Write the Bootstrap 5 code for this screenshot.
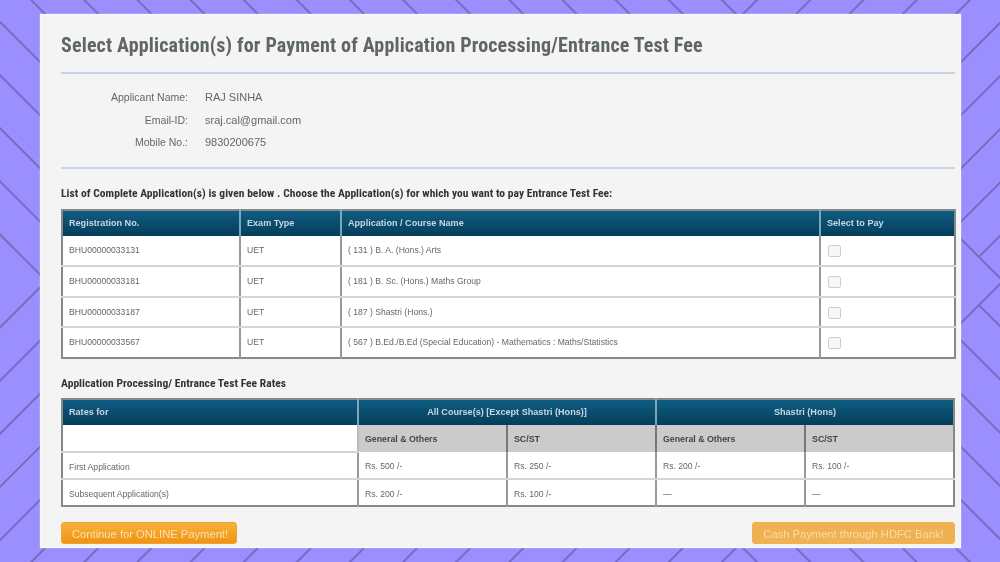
<!DOCTYPE html>
<html lang="en">
<head>
<meta charset="utf-8">
<title>Select Application(s)</title>
<link href="https://cdn.jsdelivr.net/npm/bootstrap@5.3.0/dist/css/bootstrap.min.css" rel="stylesheet">
<style>
html,body{height:562px;overflow:hidden}
body{background:#9b8fff;font-family:"Liberation Sans",Arial,sans-serif;padding:14px 39px 14px 40px;position:relative}
.pattern{position:absolute;left:0;top:0;width:1000px;height:562px}
.pattern line{stroke:#766dbd;stroke-width:2}
.sheet{position:relative;width:921px;height:534px;background:#f4f4f4;border:1px solid #fafafe;padding:0 5px 0 20px;filter:blur(.55px);box-shadow:0 0 1px #e8e8f8}
.sheet-title{font-family:"Liberation Sans Narrow","Roboto Condensed",Roboto,sans-serif;font-weight:700;font-size:20px;line-height:24px;color:#5f6668;margin:0;padding:18px 0 15px;letter-spacing:.16px}
.sheet-rule{margin:0;border:0;border-top:2px solid #c6d4e6;opacity:1}
.info{padding:12px 0 13px;font-size:10.5px;line-height:16px;color:#666}
.info-row{height:22.5px;align-items:center}
.info-label{width:127px;text-align:right;margin-right:17px}
.info-val{font-size:11px}
.sec-title{font-family:"Liberation Sans Narrow","Roboto Condensed",Roboto,sans-serif;font-weight:700;font-size:11.5px;line-height:14px;color:#333;margin:0;letter-spacing:.04px}
.sec-a{padding-top:17px;padding-bottom:9px}
.sec-b{padding-top:17px;padding-bottom:8px}
table.fee{table-layout:fixed;width:893px;margin:0;border:2px solid #888;border-collapse:collapse;font-size:8.6px;color:#666;background:#fff}
table.fee th,table.fee td{padding:2px 6px 0;vertical-align:middle;border:0;border-right:2px solid #999;border-bottom:2px solid #d4d4d4;background:#fff;color:#666;box-shadow:none}
table.fee th:last-child,table.fee td:last-child{border-right:0}
table.fee tr:last-child td{border-bottom:0}
table.fee thead th{background:linear-gradient(#0f5c83,#053e5b);color:#c7d8e2;font-size:9.1px;font-weight:700;height:26px;border-bottom:0;border-right:2px solid #7fa5bb}
table.fee .row-a td{height:30.5px;padding-top:1px}
table.fee .row-b td{height:27px;padding-top:4px}
table.fee td.sub{background:#cbcbcb;color:#444;font-weight:700;border-right-color:#777;border-bottom:0;font-size:8.8px}
table.fee td.blank{border-right-color:#bbb}
.c1{width:178px}.c2{width:101px}.c3{width:479px}.c4{width:135px}
.r1{width:296px}.r2,.r3,.r4,.r5{width:149px}
.tick{width:13px;height:12px;margin:1px 0 0 1px;border:1px solid #ccc;border-radius:3px;background:#f7f7f7;float:none;display:block}
.foot{padding-top:15px}
.pay{font-size:11.2px;line-height:16px;padding:3px 10px;height:22px;border:1px solid #eea236;border-radius:3px;color:#fbe0ae;background:linear-gradient(#f8b23a,#f09313);white-space:nowrap}
.pay-off{background:#efb152;border-color:#efb152;color:#fbdca6;width:203px}
.pay-on{width:176px}
</style>
</head>
<body>
<svg class="pattern" viewBox="0 0 1000 562" aria-hidden="true" id="bg"></svg>
<div class="sheet">
  <h1 class="sheet-title">Select Application(s) for Payment of Application Processing/Entrance Test Fee</h1>
  <hr class="sheet-rule">
  <div class="info">
    <div class="d-flex info-row"><div class="info-label">Applicant Name:</div><div class="info-val">RAJ SINHA</div></div>
    <div class="d-flex info-row"><div class="info-label">Email-ID:</div><div class="info-val">sraj.cal@gmail.com</div></div>
    <div class="d-flex info-row"><div class="info-label">Mobile No.:</div><div class="info-val">9830200675</div></div>
  </div>
  <hr class="sheet-rule">
  <p class="sec-title sec-a">List of Complete Application(s) is given below . Choose the Application(s) for which you want to pay Entrance Test Fee:</p>
  <table class="table fee">
    <colgroup><col class="c1"><col class="c2"><col class="c3"><col class="c4"></colgroup>
    <thead><tr><th>Registration No.</th><th>Exam Type</th><th>Application / Course Name</th><th>Select to Pay</th></tr></thead>
    <tbody>
      <tr class="row-a"><td>BHU00000033131</td><td>UET</td><td>( 131 ) B. A. (Hons.) Arts</td><td><input class="form-check-input tick" type="checkbox" aria-label="Select"></td></tr>
      <tr class="row-a"><td>BHU00000033181</td><td>UET</td><td>( 181 ) B. Sc. (Hons.) Maths Group</td><td><input class="form-check-input tick" type="checkbox" aria-label="Select"></td></tr>
      <tr class="row-a"><td>BHU00000033187</td><td>UET</td><td>( 187 ) Shastri (Hons.)</td><td><input class="form-check-input tick" type="checkbox" aria-label="Select"></td></tr>
      <tr class="row-a"><td>BHU00000033567</td><td>UET</td><td>( 567 ) B.Ed./B.Ed (Special Education) - Mathematics : Maths/Statistics</td><td><input class="form-check-input tick" type="checkbox" aria-label="Select"></td></tr>
    </tbody>
  </table>
  <p class="sec-title sec-b">Application Processing/ Entrance Test Fee Rates</p>
  <table class="table fee">
    <colgroup><col class="r1"><col class="r2"><col class="r3"><col class="r4"><col class="r5"></colgroup>
    <thead><tr><th>Rates for</th><th colspan="2" class="text-center">All Course(s) [Except Shastri (Hons)]</th><th colspan="2" class="text-center">Shastri (Hons)</th></tr></thead>
    <tbody>
      <tr class="row-b"><td class="blank"></td><td class="sub">General &amp; Others</td><td class="sub">SC/ST</td><td class="sub">General &amp; Others</td><td class="sub">SC/ST</td></tr>
      <tr class="row-b"><td>First Application</td><td>Rs. 500 /-</td><td>Rs. 250 /-</td><td>Rs. 200 /-</td><td>Rs. 100 /-</td></tr>
      <tr class="row-b"><td>Subsequent Application(s)</td><td>Rs. 200 /-</td><td>Rs. 100 /-</td><td>—</td><td>—</td></tr>
    </tbody>
  </table>
  <div class="d-flex justify-content-between foot">
    <button type="button" class="btn pay pay-on">Continue for ONLINE Payment!</button>
    <button type="button" class="btn pay pay-off">Cash Payment through HDFC Bank!</button>
  </div>
</div>
<script>
(function(){
  var s=document.getElementById('bg'),h='';
  function l(a,b,c,d){h+='<line x1="'+a+'" y1="'+b+'" x2="'+c+'" y2="'+d+'"/>';}
  var k,c,d,ax;
  for(k=0;k<=18;k++){c=-722+53.14*k;ax=281-c;
    l(-40,-40+c,ax,281);l(-40,602-c,ax,281);}
  for(k=0;k<=9;k++){d=757+53.2*k;ax=(d+722)/2;
    l(ax,d-ax,1040,d-1040);l(ax,562-d+ax,1040,562-d+1040);}
  s.innerHTML=h;
})();
</script>
<script src="https://cdn.jsdelivr.net/npm/bootstrap@5.3.0/dist/js/bootstrap.bundle.min.js"></script>
</body>
</html>
